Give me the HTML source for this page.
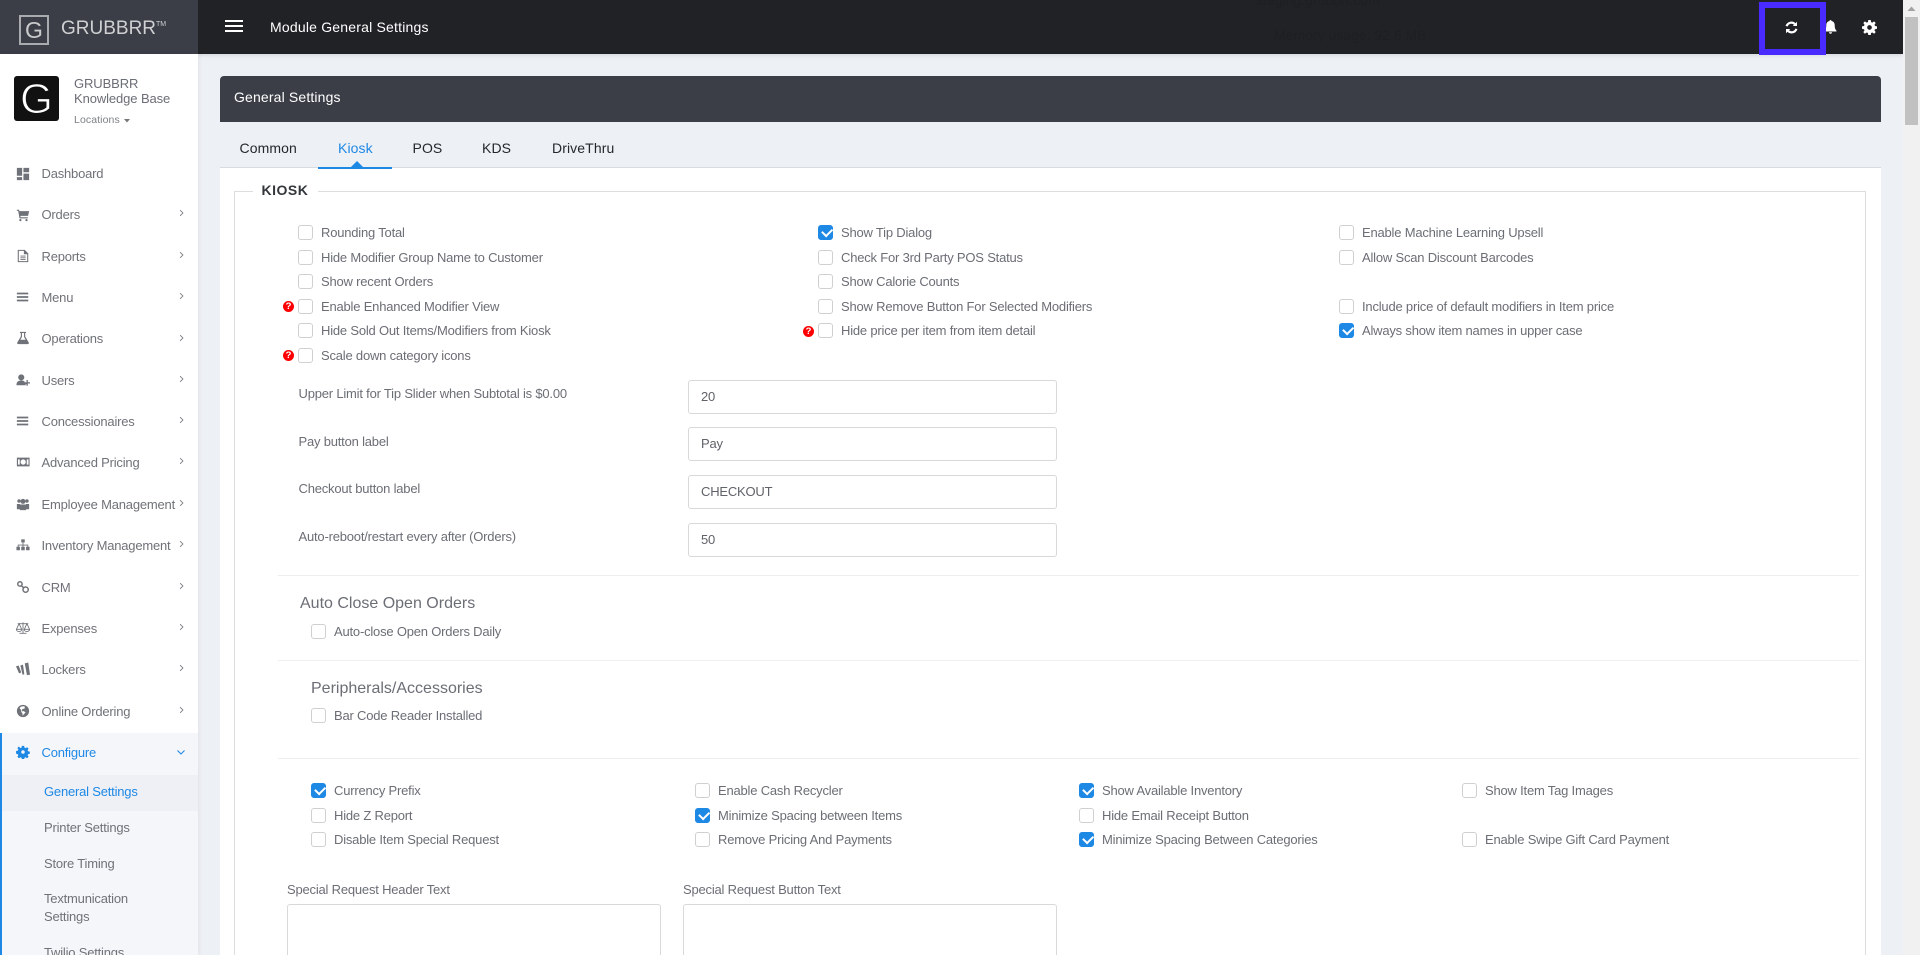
<!DOCTYPE html>
<html><head><meta charset="utf-8"><title>Module General Settings</title>
<style>
*{box-sizing:border-box}
html,body{margin:0;padding:0;width:1920px;height:955px;overflow:hidden;background:#edf0f5;font-family:"Liberation Sans",Arial,sans-serif;color:#6b6e75}
#r{position:relative;width:1920px;height:955px;overflow:hidden}
.a{position:absolute;white-space:nowrap}
.k{position:absolute;white-space:nowrap;font-size:13px;line-height:15px;color:#6b6e75;height:15px;padding-left:23px;letter-spacing:-.2px}
.k i{position:absolute;left:0;top:0;width:15px;height:15px;border:1px solid #d0d0d0;border-radius:3px;background:#fff}
.k.on i{background:#1e88e5;border-color:#1e88e5}
.k.on i:after{content:"";position:absolute;left:2.5px;top:2px;width:8px;height:4.5px;border-left:2.2px solid #fff;border-bottom:2.2px solid #fff;transform:rotate(-45deg)}
.h{position:absolute;width:11px;height:11px;border-radius:50%;background:#f00;color:#fff;font:bold 9.5px/11px "Liberation Sans",sans-serif;text-align:center}
.in{position:absolute;left:688px;width:369px;height:34px;border:1px solid #d9d9d9;border-radius:3px;background:#fff;font-size:13px;line-height:32px;padding-left:12px;color:#5f6268;letter-spacing:-.2px}
.lb{position:absolute;left:298.5px;font-size:13px;line-height:16px;color:#6b6e75;white-space:nowrap;letter-spacing:-.2px}
.hr{position:absolute;left:278px;width:1581px;height:1px;background:#eceef0}
.s{position:absolute;left:41.5px;font-size:13px;line-height:18px;color:#6f7278;white-space:nowrap;letter-spacing:-.2px}
.ic{position:absolute;left:16px;width:14px;height:14px;fill:#6f7278}
.ch{position:absolute;left:179px;width:5px;height:8px;fill:none;stroke:#75787e;stroke-width:1.200}
.sub{position:absolute;left:44px;font-size:13px;line-height:18px;color:#6f7278;white-space:nowrap;letter-spacing:-.2px}
.tab{position:absolute;top:140px;font-size:14px;line-height:17px;color:#24272c;white-space:nowrap;letter-spacing:.1px}
</style></head><body><div id="r">

<!-- top bar -->
<div class="a" style="left:0;top:0;width:1903px;height:54px;background:#212226;box-shadow:0 1px 4px rgba(0,0,0,.12)"></div>
<div class="a" style="left:0;top:0;width:198px;height:54px;background:#3b3e47"></div>
<div class="a" style="left:19px;top:15px;width:30px;height:30px;border:2px solid #a9abae;color:#c9cacc;font-size:23px;line-height:26px;text-align:center">G</div>
<div class="a" style="left:61px;top:17px;font-size:19px;line-height:24px;color:#cfd0d2">GRUBBRR<span style="font-size:7px;position:relative;top:-8px">TM</span></div>
<svg class="a" style="left:225px;top:20px" width="18" height="12"><path d="M0 1h18M0 6h18M0 11h18" stroke="#fff" stroke-width="2"/></svg>
<div class="a" style="left:270px;top:19px;font-size:14px;line-height:17px;color:#fff;letter-spacing:.2px">Module General Settings</div>
<div class="a" style="left:1256px;top:-9px;font-size:14px;line-height:18px;color:#1e1f23">staging.grubbrr.com</div>
<div class="a" style="left:1274px;top:26px;font-size:14px;line-height:18px;color:#1e1f23">Memory usage: 92.6 MB</div>

<!-- right icons -->
<svg class="a" style="left:1785px;top:21px" width="13" height="13" viewBox="0 0 13 13" fill="none" stroke="#fff" stroke-width="2.200"><path d="M1.600 5.200A5 5 0 0 1 10 3.200"/><path d="M11.400 7.800A5 5 0 0 1 3 9.800"/><path d="M12 .8V5H7.800z" fill="#fff" stroke="none"/><path d="M1 12.200V8h4.200z" fill="#fff" stroke="none"/></svg>
<svg class="a" style="left:1824px;top:20px" width="13" height="14" viewBox="0 0 13 14" fill="#fff"><path d="M6.500 0c.6 0 1 .4 1 1 2 .4 3.200 2 3.200 4 0 3 .6 4.300 1.800 5.800v.7H.5v-.7C1.700 9.300 2.300 8 2.300 5c0-2 1.200-3.600 3.200-4 0-.6.4-1 1-1z"/><path d="M5 12.300h3A1.500 1.500 0 0 1 5 12.300z"/></svg>
<svg class="a" style="left:1862px;top:20px" width="15" height="15" viewBox="0 0 16 16"><path fill="#fff" fill-rule="evenodd" d="M6.700 0h2.600l.4 2.200 1.300.6L12.900 1.500l1.700 1.700-1.300 1.900.6 1.300 2.100.4v2.500l-2.200.5-.5 1.200 1.300 1.900-1.700 1.700-1.900-1.300-1.300.5-.4 2.200H6.700l-.4-2.200-1.300-.5-1.900 1.300-1.700-1.700 1.300-1.900-.6-1.200L0 9.300V6.800l2.100-.4.6-1.300L1.400 3.200 3.100 1.500 5 2.800l1.300-.6zM8 5.500a2.500 2.500 0 1 0 0 5 2.500 2.500 0 0 0 0-5z"/></svg>
<div class="a" style="left:1759px;top:2px;width:67px;height:53px;border:6px solid #4a2bff"></div>

<!-- scrollbar -->
<div class="a" style="left:1903px;top:0;width:17px;height:955px;background:#f1f1f1"></div>
<svg class="a" style="left:1903px;top:0" width="17" height="17"><path d="M4.500 11L8.500 6.500 12.500 11z" fill="#a3a3a3"/></svg>
<div class="a" style="left:1905px;top:17px;width:13px;height:108px;background:#c1c1c1"></div>

<!-- sidebar -->
<div class="a" style="left:0;top:54px;width:198px;height:901px;background:#fff;box-shadow:1px 0 4px rgba(0,0,0,.06);overflow:hidden"></div>
<div class="a" style="left:14px;top:76px;width:45px;height:45px;background:#111;border-radius:3px;color:#fff;font-size:42px;line-height:45px;text-align:center;-webkit-text-stroke:.9px #111">G</div>
<div class="a" style="left:74px;top:77px;font-size:13px;line-height:14.500px;color:#6b6e75;letter-spacing:-.1px">GRUBBRR<br>Knowledge Base</div>
<div class="a" style="left:74px;top:113px;font-size:10.500px;line-height:14px;color:#7d8086;letter-spacing:.1px">Locations</div>
<svg class="a" style="left:124px;top:119px" width="6" height="4"><path d="M0 0h6L3 3.500z" fill="#777"/></svg>

<svg class="ic" style="top:167px" viewBox="0 0 16 16"><path d="M1 1h6v9H1zM8.500 1H15v5H8.500zM1 11.500h6V15H1zM8.500 7.500H15V15H8.500z"/></svg>
<div class="s" style="top:165px">Dashboard</div>
<svg class="ic" style="top:208px" viewBox="0 0 16 16"><path d="M1 2h2.500l.4 1.500H15l-1.200 5.500H5l.3 1.500H13.500v1.300H4L2.500 3.300H1zM5 12.500a1.300 1.300 0 1 1 0 2.600 1.300 1.300 0 0 1 0-2.600zM12 12.500a1.300 1.300 0 1 1 0 2.600 1.300 1.300 0 0 1 0-2.600z"/></svg>
<div class="s" style="top:206px">Orders</div>
<svg class="ch" style="top:209px" viewBox="0 0 7 10"><path d="M1.500 1l4 4-4 4"/></svg>
<svg class="ic" style="top:249px" viewBox="0 0 16 16"><path fill-rule="evenodd" d="M2 1h8l4 4v10H2zM3.200 2.200v11.600h9.600V6H9V2.200zM5 7.500h6v1H5zM5 9.500h6v1H5zM5 11.500h6v1H5z"/></svg>
<div class="s" style="top:248px">Reports</div>
<svg class="ch" style="top:251px" viewBox="0 0 7 10"><path d="M1.500 1l4 4-4 4"/></svg>
<svg class="ic" style="top:290px" viewBox="0 0 16 16"><path d="M1 3h13v2H1zM1 7h13v2H1zM1 11h13v2H1z"/></svg>
<div class="s" style="top:289px">Menu</div>
<svg class="ch" style="top:292px" viewBox="0 0 7 10"><path d="M1.500 1l4 4-4 4"/></svg>
<svg class="ic" style="top:331px" viewBox="0 0 16 16"><path d="M4.500 1h7v1.300h-1v4L14.500 13c.6 1.200-.1 2-1.200 2H2.700c-1.100 0-1.800-.8-1.200-2l4-6.700v-4h-1zM6.800 2.300v4.400L5 10h6L9.200 6.700V2.300z"/></svg>
<div class="s" style="top:330px">Operations</div>
<svg class="ch" style="top:334px" viewBox="0 0 7 10"><path d="M1.500 1l4 4-4 4"/></svg>
<svg class="ic" style="top:373px" viewBox="0 0 16 16"><circle cx="6" cy="5" r="3.500"/><path d="M.5 14c0-4 2-5.500 5.500-5.500 2 0 3 .5 3.800 1.200V11H12v1.800h-1V14zM12 8h1.500v2.500H16V12h-2.500v2.500H12V12H9.500v-1.500H12z"/></svg>
<div class="s" style="top:372px">Users</div>
<svg class="ch" style="top:375px" viewBox="0 0 7 10"><path d="M1.500 1l4 4-4 4"/></svg>
<svg class="ic" style="top:414px" viewBox="0 0 16 16"><path d="M1 3h13v2H1zM1 7h13v2H1zM1 11h13v2H1z"/></svg>
<div class="s" style="top:413px">Concessionaires</div>
<svg class="ch" style="top:416px" viewBox="0 0 7 10"><path d="M1.500 1l4 4-4 4"/></svg>
<svg class="ic" style="top:455px" viewBox="0 0 16 16"><path fill-rule="evenodd" d="M1 3h14.500v10H1zM2.300 5v6h2V5zM12.300 5v6h2V5zM8.200 5a3 3 0 1 0 0 6 3 3 0 0 0 0-6z"/></svg>
<div class="s" style="top:454px">Advanced Pricing</div>
<svg class="ch" style="top:457px" viewBox="0 0 7 10"><path d="M1.500 1l4 4-4 4"/></svg>
<svg class="ic" style="top:497px" viewBox="0 0 16 16"><circle cx="3.500" cy="4.500" r="2"/><circle cx="12.500" cy="4.500" r="2"/><circle cx="8" cy="5" r="2.800"/><path d="M1 8h3.500v6H1zM11.500 8H15v6h-3.500zM4.500 8.500h7V15h-7z"/></svg>
<div class="s" style="top:496px">Employee Management</div>
<svg class="ch" style="top:499px" viewBox="0 0 7 10"><path d="M1.500 1l4 4-4 4"/></svg>
<svg class="ic" style="top:538px" viewBox="0 0 16 16"><path d="M6 1.500h4v3.500H6zM7.500 5h1v2.500H14V10h-1V8.500H8.500V10h-1V8.500H3V10H2V7.500h5.500zM.5 10H4.500v4H.5zM6 10h4v4H6zM11.500 10h4v4h-4z"/></svg>
<div class="s" style="top:537px">Inventory Management</div>
<svg class="ch" style="top:540px" viewBox="0 0 7 10"><path d="M1.500 1l4 4-4 4"/></svg>
<svg class="ic" style="top:580px;fill:none;stroke:#6f7278;stroke-width:1.700" viewBox="0 0 16 16"><circle cx="4.500" cy="4.500" r="2.500"/><circle cx="11" cy="11" r="3"/><path d="M6 6.500l3 2.500"/></svg>
<div class="s" style="top:579px">CRM</div>
<svg class="ch" style="top:582px" viewBox="0 0 7 10"><path d="M1.500 1l4 4-4 4"/></svg>
<svg class="ic" style="top:621px;fill:none;stroke:#6f7278;stroke-width:1" viewBox="0 0 16 16"><path d="M8 1.500V14M4 14h8M2 3h12M3.500 3l-3 6.500h6zM12.500 3l-3 6.500h6zM.5 9.500a3 2.500 0 0 0 6 0M9.500 9.500a3 2.500 0 0 0 6 0"/></svg>
<div class="s" style="top:620px">Expenses</div>
<svg class="ch" style="top:623px" viewBox="0 0 7 10"><path d="M1.500 1l4 4-4 4"/></svg>
<svg class="ic" style="top:662px" viewBox="0 0 16 16"><path d="M0 5l3-1 3 8-2.500 1zM5 4l3-1 1.500 11-2 .5zM10 1.500l4-1 2 14-3.500.5z"/></svg>
<div class="s" style="top:661px">Lockers</div>
<svg class="ch" style="top:664px" viewBox="0 0 7 10"><path d="M1.500 1l4 4-4 4"/></svg>
<svg class="ic" style="top:704px" viewBox="0 0 16 16"><path fill-rule="evenodd" d="M8 1a7 7 0 1 1 0 14A7 7 0 0 1 8 1zM4 4.500l2 2.500v2l1.500 2v2.500l1.500-2 2-2-2.500-1.500-1.500.5V6l3-1V3a5.700 5.700 0 0 0-6 1.500z"/></svg>
<div class="s" style="top:703px">Online Ordering</div>
<svg class="ch" style="top:706px" viewBox="0 0 7 10"><path d="M1.500 1l4 4-4 4"/></svg>

<div class="a" style="left:0;top:733px;width:198px;height:222px;background:#f5f6fa;border-left:2px solid #1e88e5"></div>
<svg class="ic" style="top:745px;fill:#1e88e5" viewBox="0 0 16 16"><path fill-rule="evenodd" d="M6.700 1h2.600l.4 2 1.300.6 1.700-1.100 1.700 1.700-1.100 1.700.5 1.300 2 .4v2.400l-2 .5-.5 1.200 1.100 1.700-1.700 1.700-1.700-1.100-1.300.5-.4 2H6.700l-.4-2-1.300-.5-1.700 1.100-1.700-1.700 1.100-1.700-.6-1.200-2-.5V6.800l2-.4.6-1.300-1.100-1.700 1.700-1.700L5 3.600 6.300 3zM8 6a2 2 0 1 0 0 4 2 2 0 0 0 0-4z"/></svg>
<div class="s" style="top:744px;color:#1e88e5">Configure</div>
<svg class="a" style="left:176px;top:749px" width="10" height="7" fill="none" stroke="#1e88e5" stroke-width="1.100"><path d="M1.500 1.500l3.500 3.500 3.500-3.500"/></svg>
<div class="a" style="left:2px;top:775px;width:196px;height:36px;background:#eef0f5"></div>
<div class="sub" style="top:783px;color:#1e88e5">General Settings</div>
<div class="sub" style="top:819px">Printer Settings</div>
<div class="sub" style="top:855px">Store Timing</div>
<div class="sub" style="top:890px">Textmunication</div>
<div class="sub" style="top:908px">Settings</div>
<div class="sub" style="top:944px">Twilio Settings</div>

<!-- panel -->
<div class="a" style="left:220px;top:76px;width:1661px;height:46px;background:#3b3e47;border-radius:4px 4px 0 0"></div>
<div class="a" style="left:234px;top:89px;font-size:14px;line-height:17px;color:#fff;letter-spacing:.15px">General Settings</div>
<div class="a" style="left:220px;top:122px;width:1661px;height:46px;background:#edf0f5;border-bottom:1px solid #d8dbe0"></div>
<div class="a" style="left:220px;top:168px;width:1661px;height:787px;background:#fff"></div>
<div class="tab" style="left:239.500px">Common</div>
<div class="tab" style="left:338px;color:#1e88e5">Kiosk</div>
<div class="tab" style="left:412.500px">POS</div>
<div class="tab" style="left:482px">KDS</div>
<div class="tab" style="left:552px">DriveThru</div>
<div class="a" style="left:318px;top:167px;width:74px;height:1.500px;background:#1e88e5"></div>
<div class="a" style="left:351px;top:161px;width:0;height:0;border:6px solid transparent;border-top:0;border-bottom:6px solid #1e88e5"></div>

<!-- fieldset -->
<div class="a" style="left:234px;top:190.500px;width:1632px;height:765px;border:1px solid #ddd;border-bottom:0"></div>
<div class="a" style="left:253px;top:180px;width:65px;height:20px;background:#fff"></div>
<div class="a" style="left:261.500px;top:182px;font-size:14px;font-weight:bold;line-height:17px;color:#33363b;letter-spacing:.5px">KIOSK</div>

<label class="k" style="left:298px;top:225px"><i></i>Rounding Total</label>
<label class="k" style="left:298px;top:250px"><i></i>Hide Modifier Group Name to Customer</label>
<label class="k" style="left:298px;top:274px"><i></i>Show recent Orders</label>
<label class="k" style="left:298px;top:299px"><i></i>Enable Enhanced Modifier View</label>
<label class="k" style="left:298px;top:323px"><i></i>Hide Sold Out Items/Modifiers from Kiosk</label>
<label class="k" style="left:298px;top:348px"><i></i>Scale down category icons</label>
<span class="h" style="left:283px;top:301px">?</span>
<span class="h" style="left:283px;top:350px">?</span>

<label class="k on" style="left:818px;top:225px"><i></i>Show Tip Dialog</label>
<label class="k" style="left:818px;top:250px"><i></i>Check For 3rd Party POS Status</label>
<label class="k" style="left:818px;top:274px"><i></i>Show Calorie Counts</label>
<label class="k" style="left:818px;top:299px"><i></i>Show Remove Button For Selected Modifiers</label>
<label class="k" style="left:818px;top:323px"><i></i>Hide price per item from item detail</label>
<span class="h" style="left:803px;top:326px">?</span>

<label class="k" style="left:1339px;top:225px"><i></i>Enable Machine Learning Upsell</label>
<label class="k" style="left:1339px;top:250px"><i></i>Allow Scan Discount Barcodes</label>
<label class="k" style="left:1339px;top:299px"><i></i>Include price of default modifiers in Item price</label>
<label class="k on" style="left:1339px;top:323px"><i></i>Always show item names in upper case</label>

<div class="lb" style="top:386px">Upper Limit for Tip Slider when Subtotal is $0.00</div>
<div class="in" style="top:380px">20</div>
<div class="lb" style="top:434px">Pay button label</div>
<div class="in" style="top:427px">Pay</div>
<div class="lb" style="top:481px">Checkout button label</div>
<div class="in" style="top:475px">CHECKOUT</div>
<div class="lb" style="top:529px">Auto-reboot/restart every after (Orders)</div>
<div class="in" style="top:523px">50</div>

<div class="hr" style="top:575px"></div>
<div class="a" style="left:300px;top:595px;font-size:16px;line-height:18px;color:#6b6e75">Auto Close Open Orders</div>
<label class="k" style="left:311px;top:624px"><i></i>Auto-close Open Orders Daily</label>
<div class="hr" style="top:660px"></div>
<div class="a" style="left:311px;top:680px;font-size:16px;line-height:18px;color:#6b6e75">Peripherals/Accessories</div>
<label class="k" style="left:311px;top:708px"><i></i>Bar Code Reader Installed</label>
<div class="hr" style="top:758px"></div>

<label class="k on" style="left:311px;top:783px"><i></i>Currency Prefix</label>
<label class="k" style="left:311px;top:808px"><i></i>Hide Z Report</label>
<label class="k" style="left:311px;top:832px"><i></i>Disable Item Special Request</label>
<label class="k" style="left:695px;top:783px"><i></i>Enable Cash Recycler</label>
<label class="k on" style="left:695px;top:808px"><i></i>Minimize Spacing between Items</label>
<label class="k" style="left:695px;top:832px"><i></i>Remove Pricing And Payments</label>
<label class="k on" style="left:1079px;top:783px"><i></i>Show Available Inventory</label>
<label class="k" style="left:1079px;top:808px"><i></i>Hide Email Receipt Button</label>
<label class="k on" style="left:1079px;top:832px"><i></i>Minimize Spacing Between Categories</label>
<label class="k" style="left:1462px;top:783px"><i></i>Show Item Tag Images</label>
<label class="k" style="left:1462px;top:832px"><i></i>Enable Swipe Gift Card Payment</label>

<div class="lb" style="left:287px;top:882px">Special Request Header Text</div>
<div class="lb" style="left:683px;top:882px">Special Request Button Text</div>
<div class="a" style="left:287px;top:904px;width:374px;height:70px;border:1px solid #d9d9d9;border-radius:3px;background:#fff"></div>
<div class="a" style="left:683px;top:904px;width:374px;height:70px;border:1px solid #d9d9d9;border-radius:3px;background:#fff"></div>
</div></body></html>
